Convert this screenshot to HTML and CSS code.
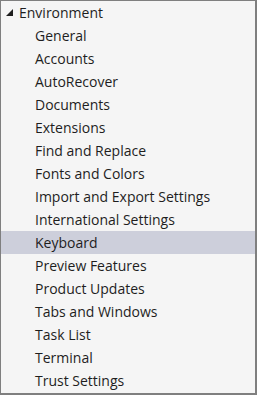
FILE: index.html
```html
<!DOCTYPE html>
<html lang="en">
<head>
  <meta charset="UTF-8" />
  <title>Options</title>
  <link rel="stylesheet" href="styles.css">
</head>
<body>
  <!-- Options tree -->
  <div class="tree">
    <div class="node parent">
      <svg class="arrow" width="7" height="7" viewBox="0 0 7 7"><path d="M7 0 L7 7 L0 7 Z" fill="#1e1e1e"/></svg>
      <span>Environment</span>
    </div>
    <div class="node child">General</div>
    <div class="node child">Accounts</div>
    <div class="node child">AutoRecover</div>
    <div class="node child">Documents</div>
    <div class="node child">Extensions</div>
    <div class="node child">Find and Replace</div>
    <div class="node child">Fonts and Colors</div>
    <div class="node child">Import and Export Settings</div>
    <div class="node child">International Settings</div>
    <div class="node child selected">Keyboard</div>
    <div class="node child">Preview Features</div>
    <div class="node child">Product Updates</div>
    <div class="node child">Tabs and Windows</div>
    <div class="node child">Task List</div>
    <div class="node child">Terminal</div>
    <div class="node child">Trust Settings</div>
  </div>
</body>
</html>
```

FILE: styles.css
```css
* {
  box-sizing: border-box;
  margin: 0;
  padding: 0;
}

body {
  background: #f5f5f5;
  font-family: 'Open Sans', 'Noto Sans', sans-serif;
}

.tree {
  width: 257px;
  height: 395px;
  border: 1px solid #7f7f7f;
  border-right-width: 2px;
  border-bottom-width: 2px;
  background: #f5f5f5;
}

.node {
  height: 23px;
  display: flex;
  align-items: center;
  font-size: 14px;
  color: #1e1e1e;
  white-space: nowrap;
}

.parent {
  padding-left: 5px;
  gap: 6px;
}

.arrow {
  flex-shrink: 0;
}

.child {
  padding-left: 34px;
}

.selected {
  background: #cdcfdb;
}
```
